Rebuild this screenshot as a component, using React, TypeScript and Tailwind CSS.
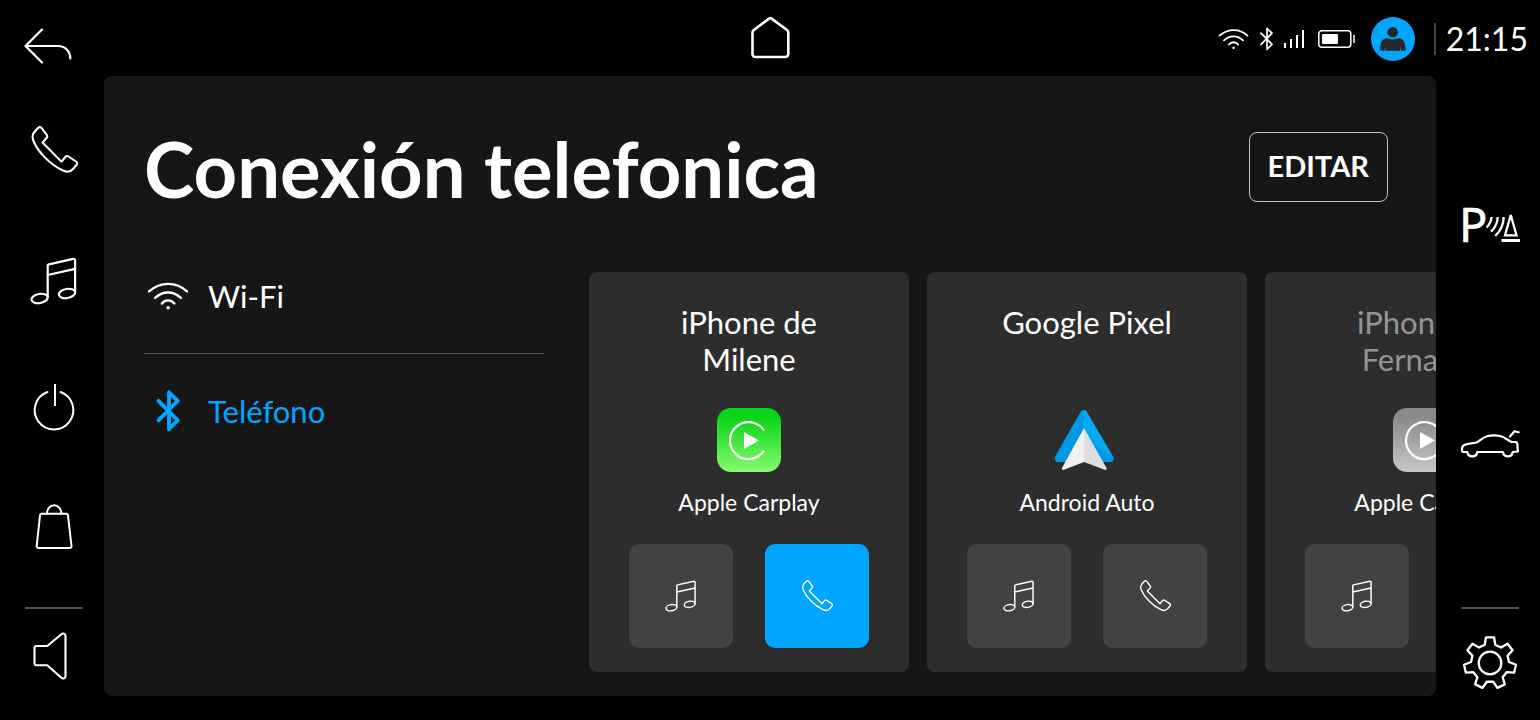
import React, { useState } from "react";

type IconProps = {
  className?: string;
};

type Device = {
  id: number;
  name: string;
  platform: "carplay" | "android";
  label: string;
  connected: boolean;
  active: "music" | "phone" | null;
};

const devices: Device[] = [
  {
    id: 1,
    name: "iPhone de Milene",
    platform: "carplay",
    label: "Apple Carplay",
    connected: true,
    active: "phone",
  },
  {
    id: 2,
    name: "Google Pixel",
    platform: "android",
    label: "Android Auto",
    connected: true,
    active: null,
  },
  {
    id: 3,
    name: "iPhone de Fernanda",
    platform: "carplay",
    label: "Apple Carplay",
    connected: false,
    active: null,
  },
];

// Shared props for the line icons
const line = {
  fill: "none",
  stroke: "currentColor",
  strokeLinecap: "round",
  strokeLinejoin: "round",
  "aria-hidden": true,
} as const;

const BackIcon = () => (
  <svg {...line} strokeWidth={2.2} viewBox="0 0 48 36" className="w-12 h-9">
    <path d="M18 1.5 1.5 18 18 34.5M1.5 18H34C41 18 46.3 23 46.3 30.5" />
  </svg>
);

const HomeIcon = () => (
  <svg {...line} strokeWidth={2.6} viewBox="0 0 40 44" className="w-10 h-11">
    <path d="M19 2.6a2.2 2.2 0 0 1 2.6 0L37 14a3 3 0 0 1 1.3 2.5V38a3 3 0 0 1-3 3H5.5a3 3 0 0 1-3-3V16.5A3 3 0 0 1 3.8 14Z" />
  </svg>
);

const PhoneIcon = ({ className }: IconProps) => (
  <svg {...line} strokeWidth={2.1} viewBox="0 0 48 48" className={className}>
    <path d="M8 2C9.2.8 10.7.8 11.7 2L16.8 9C17.5 10 17.4 11 16.7 11.8L12.5 16.6 31.5 35.7 35.3 31C36.1 30 37.3 29.7 38.5 30.5L46 35.5C47.3 36.4 47.5 37.8 46.5 39L43 43C40.5 46 37 46.5 33 44.5 20 38.5 8 26 3.5 15 2 11 2 9 4 6.5Z" />
  </svg>
);

const MusicIcon = ({ className }: IconProps) => (
  <svg {...line} strokeWidth={2.2} viewBox="0 0 48 48" className={className}>
    <path d="M17.7 40V8.8a1.5 1.5 0 0 1 1.2-1.5L43.3 1.9a1.5 1.5 0 0 1 1.8 1.5V35M17.7 18 45 11.9" />
    <ellipse cx="9.6" cy="41.5" rx="8.2" ry="4.6" transform="rotate(-10 9.6 41.5)" />
    <ellipse cx="37" cy="36.5" rx="8.2" ry="4.6" transform="rotate(-10 37 36.5)" />
  </svg>
);

const PowerIcon = () => (
  <svg {...line} strokeWidth={2} viewBox="0 0 48 48" className="size-12">
    <path d="M17.5 8a19.3 19.3 0 1 0 13 0" />
    <path d="M25 0V22" strokeLinecap="butt" />
  </svg>
);

const BagIcon = () => (
  <svg {...line} strokeWidth={2} viewBox="0 0 48 48" className="size-12">
    <path d="M12 10.7H36a2 2 0 0 1 2 1.8L41.5 43a1.8 1.8 0 0 1-1.8 2H8.5a1.8 1.8 0 0 1-1.8-2L10 12.5a2 2 0 0 1 2-1.8Z" />
    <path d="M17 10.5a7 8.2 0 0 1 14.3 0" />
  </svg>
);

const SpeakerIcon = () => (
  <svg {...line} strokeWidth={2.1} viewBox="0 0 48 48" className="size-12">
    <path d="M6.5 14H17.3L31.3 2.2C33 .8 35.5 1.5 35.5 4V44C35.5 46.5 33 47.2 31.3 45.8L17.3 33.3H6.5a2 2 0 0 1-2-2V16a2 2 0 0 1 2-2Z" />
  </svg>
);

const WifiIcon = ({ className }: IconProps) => (
  <svg {...line} strokeWidth={1.8} viewBox="0 0 31 22" className={className}>
    <path d="M1.5 7.6C10 .2 21.5.2 29.5 7.6M6 12.4C11.5 7 19.5 7 25 12.4M11 16.5C13.5 13.5 17.5 13.5 20.2 16.5" />
    <circle cx="15.6" cy="19.7" r="1.3" fill="currentColor" stroke="none" />
  </svg>
);

const BluetoothIcon = ({ className, strokeWidth = 1.7 }: IconProps & { strokeWidth?: number }) => (
  <svg {...line} strokeWidth={strokeWidth} viewBox="0 0 16 24" className={className}>
    <path d="M2 6.2 13 17.3 8 22.3V1.3L13 6.2 2 17.3" />
  </svg>
);

const SignalIcon = () => (
  <svg {...line} strokeWidth={2} strokeLinecap="butt" viewBox="0 0 22 20" className="w-[22px] h-5">
    <path d="M2 19V14M8 19V10M14 19V6M20 19V1" />
  </svg>
);

const BatteryIcon = () => (
  <svg {...line} strokeWidth={1.5} viewBox="0 0 38 20" className="w-[38px] h-5">
    <rect x="1.8" y="1.8" width="32" height="16.5" rx="3" />
    <rect x="5" y="5" width="16" height="10" rx="1" fill="currentColor" stroke="none" />
    <path d="M37 6.5V13.5" />
  </svg>
);

const UserIcon = () => (
  <svg viewBox="0 0 44 44" className="size-11" aria-hidden="true">
    <circle cx="22" cy="22" r="22" fill="#00a5ff" />
    <circle cx="21.7" cy="15.3" r="5.3" fill="#25282a" />
    <path
      d="M14.5 21.5C17 20.7 18.5 22.5 21.7 22.5 25 22.5 26.5 20.7 29 21.5 33 22.5 34.7 26 34.7 33.7H30.2L29.7 29.5 29.2 33.7H14.5L14 29.5 13.5 33.7H9.2C9.2 26 10.5 22.5 14.5 21.5Z"
      fill="#25282a"
    />
  </svg>
);

const ParkingIcon = () => (
  <svg
    {...line}
    strokeWidth={2.3}
    strokeLinecap="butt"
    viewBox="-2 0 62 40"
    className="w-[62px] h-10 overflow-visible"
  >
    <text
      x="-2"
      y="37"
      fontSize="47"
      fill="currentColor"
      strokeWidth={0.6}
      fontFamily="Noto Sans, sans-serif"
    >
      P
    </text>
    <path d="M25.5 22.5Q30 18 30.5 12M30 26.7Q36.5 20.5 36.7 12M34.3 31Q42.5 23 42.7 12" />
    <path d="M49.5 11H50L55.5 30.3H44Z" strokeLinejoin="miter" />
    <path d="M40.5 35.5H59" strokeWidth={3} />
  </svg>
);

const CarIcon = () => (
  <svg {...line} strokeWidth={2.2} viewBox="0 0 60 32" className="w-15 h-8">
    <path d="M7.3 24H3.3C2.3 24 2 23.5 2 22.5V20.5C2.3 18 4 16.8 7 16.2L16.5 14.5C20 12.5 23 9.5 27 8.3 31 7.3 37 7.3 41 8.3 45 9.5 48 12.5 51.5 14H56.5L57.5 16.5V20L58 23.5 52.7 24C52.3 26.7 50.5 28.3 47.9 28.3 45.3 28.3 43.3 26.7 42.9 24H17.3C16.9 26.7 15 28.3 12.4 28.3 9.8 28.3 7.7 26.7 7.3 24Z" />
    <path d="M50 8.5 54.5 3.2 58.7 4.2" />
  </svg>
);

// Seven teeth, each drawn as base, tip, tip, base
const gearPoints = Array.from({ length: 7 }, (_, i) => {
  const mid = (i * 360) / 7;
  return [
    [mid - 16, 19],
    [mid - 9, 26],
    [mid + 9, 26],
    [mid + 16, 19],
  ]
    .map(([deg, r]) => {
      const a = (deg * Math.PI) / 180;
      return `${(28 + r * Math.sin(a)).toFixed(2)},${(28 - r * Math.cos(a)).toFixed(2)}`;
    })
    .join(" ");
}).join(" ");

const GearIcon = () => (
  <svg {...line} strokeWidth={2.3} viewBox="0 0 56 56" className="size-14">
    <polygon points={gearPoints} />
    <circle cx="28" cy="28" r="11.3" />
  </svg>
);

const CarplayLogo = ({ muted }: { muted: boolean }) => {
  const id = muted ? "carplay-muted" : "carplay";

  return (
    <svg viewBox="0 0 64 64" className="size-16" aria-hidden="true">
      <defs>
        <linearGradient id={id} x1="0" y1="0" x2="0" y2="1">
          <stop offset="0.15" stopColor={muted ? "#8a8a8a" : "#0bd318"} />
          <stop offset="1" stopColor={muted ? "#c8c8c8" : "#86fc6f"} />
        </linearGradient>
      </defs>
      <rect width="64" height="64" rx="14" fill={`url(#${id})`} />
      <path d="M47 22.5A18.5 18.5 0 1 0 47 42.7" fill="none" stroke="#fff" strokeWidth="2.2" />
      <path d="M27 24 42 32.5 27 41Z" fill="#fff" />
    </svg>
  );
};

const AndroidAutoLogo = () => (
  <svg viewBox="3 0 64 64" className="size-16" aria-hidden="true">
    <path d="M32 2C30.5 2 29.3 2.7 28.5 4L3.2 48.5C1.8 51.3 3.5 54 6.5 54H15L32 22Z" fill="#0099e5" />
    <path d="M32 2C33.5 2 34.3 2.7 35 4L61 48.5C62.5 51.3 61 54 57.7 54H48L32 22Z" fill="#02a9f7" />
    <path d="M32 22 45 39 61 48.5C62.5 51.3 61 54 57.7 54H48Z" fill="#0099e5" />
    <path d="M32 20 10 60C9.5 61.5 10.5 62.3 12 61.8L32 54Z" fill="#f1f1f1" />
    <path d="M32 20 54.5 60C55 61.5 54 62.3 52.5 61.8L32 54Z" fill="#dedede" />
  </svg>
);

const DeviceCard = ({ device }: { device: Device }) => {
  const [active, setActive] = useState(device.active);

  return (
    <article className="flex flex-col items-center shrink-0 w-80 h-[400px] px-10 pt-8 pb-6 rounded-lg bg-[#2d2d2d]">
      <h2
        className={`h-[104px] w-44 text-center text-[31px] leading-[37px] ${
          device.connected ? "text-white" : "text-[#949494]"
        }`}
      >
        {device.name}
      </h2>
      {device.platform === "carplay" ? (
        <CarplayLogo muted={!device.connected} />
      ) : (
        <AndroidAutoLogo />
      )}
      <p className="mt-4 text-[23px] leading-7">{device.label}</p>
      <div className="flex gap-8 mt-auto">
        <button
          type="button"
          aria-label="Música"
          onClick={() => setActive("music")}
          className={`flex items-center justify-center size-26 rounded-[10px] ${
            active === "music" ? "bg-[#00a5ff]" : "bg-[#424242]"
          }`}
        >
          <MusicIcon className="size-8" />
        </button>
        <button
          type="button"
          aria-label="Llamadas"
          onClick={() => setActive("phone")}
          className={`flex items-center justify-center size-26 rounded-[10px] ${
            active === "phone" ? "bg-[#00a5ff]" : "bg-[#424242]"
          }`}
        >
          <PhoneIcon className="size-8" />
        </button>
      </div>
    </article>
  );
};

const App = () => {
  const [tab, setTab] = useState<"wifi" | "phone">("phone");

  return (
    <div className="flex flex-col min-h-screen bg-black text-white font-[Lato,sans-serif]">
      <header className="grid grid-cols-[1fr_auto_1fr] h-19">
        <button type="button" aria-label="Volver" className="justify-self-start self-end ml-6 mb-3">
          <BackIcon />
        </button>
        <button type="button" aria-label="Inicio" className="self-center">
          <HomeIcon />
        </button>
        <div className="flex items-center justify-self-end pr-3 pt-0.5">
          <WifiIcon className="w-[31px] h-[22px]" />
          <span className="ml-2.5">
            <BluetoothIcon className="w-4 h-6" />
          </span>
          <span className="ml-2">
            <SignalIcon />
          </span>
          <span className="ml-3">
            <BatteryIcon />
          </span>
          <button type="button" aria-label="Perfil" className="ml-4">
            <UserIcon />
          </button>
          <span className="ml-[19px] w-0.5 h-8 bg-[#444444]" />
          <time className="ml-2.5 text-[32px] leading-8">21:15</time>
        </div>
      </header>

      <div className="flex flex-1">
        <nav aria-label="Principal" className="flex flex-col items-center w-26 pt-[50px] pb-10 pl-1">
          <button type="button" aria-label="Teléfono">
            <PhoneIcon className="size-12" />
          </button>
          <button type="button" aria-label="Música" className="mt-[83px]">
            <MusicIcon className="size-12" />
          </button>
          <button type="button" aria-label="Apagar" className="mt-[79px]">
            <PowerIcon />
          </button>
          <button type="button" aria-label="Tienda" className="mt-[71px]">
            <BagIcon />
          </button>
          <div className="w-[58px] h-0.5 mt-auto bg-[#4d4d4d]" />
          <button type="button" aria-label="Volumen" className="mt-[23px]">
            <SpeakerIcon />
          </button>
        </nav>

        <main className="flex flex-col flex-1 min-w-0 mb-6 rounded-lg bg-[#161616] overflow-hidden">
          <div className="flex items-start justify-between pl-10 pr-12 pt-14">
            <h1 className="text-[76px] leading-[74px] font-bold">Conexión telefonica</h1>
            <button
              type="button"
              className="h-[70px] px-[18px] pb-0.5 border border-[#c4c4c4] rounded-lg text-[29px] leading-8 font-bold"
            >
              EDITAR
            </button>
          </div>

          <div className="flex flex-1 mt-[66px] pl-10">
            <div className="w-[400px] shrink-0 text-[31px] leading-10">
              <button
                type="button"
                onClick={() => setTab("wifi")}
                className={`flex items-center gap-4 w-full pt-1 pb-[37px] border-b border-[#4d4d4d] ${
                  tab === "wifi" ? "text-[#00a5ff]" : "text-white"
                }`}
              >
                <span className="flex justify-center w-12">
                  <WifiIcon className="w-[42px] h-[30px]" />
                </span>
                Wi-Fi
              </button>
              <button
                type="button"
                onClick={() => setTab("phone")}
                className={`flex items-center gap-4 w-full py-9 ${
                  tab === "phone" ? "text-[#00a5ff]" : "text-white"
                }`}
              >
                <span className="flex justify-center w-12 pl-0.5">
                  <BluetoothIcon className="w-7 h-[42px]" strokeWidth={2.2} />
                </span>
                Teléfono
              </button>
            </div>

            <div className="flex flex-1 gap-[18px] ml-[45px] min-w-0 overflow-hidden">
              {devices.map((device) => (
                <DeviceCard key={device.id} device={device} />
              ))}
            </div>
          </div>
        </main>

        <nav aria-label="Vehículo" className="flex flex-col items-center w-26 pt-[129px] pb-[29px] pl-1">
          <button type="button" aria-label="Sensores de estacionamiento">
            <ParkingIcon />
          </button>
          <button type="button" aria-label="Vehículo" className="mt-[183px]">
            <CarIcon />
          </button>
          <div className="w-[58px] h-0.5 mt-auto bg-[#4d4d4d]" />
          <button type="button" aria-label="Ajustes" className="mt-[26px]">
            <GearIcon />
          </button>
        </nav>
      </div>
    </div>
  );
};

export default App;
